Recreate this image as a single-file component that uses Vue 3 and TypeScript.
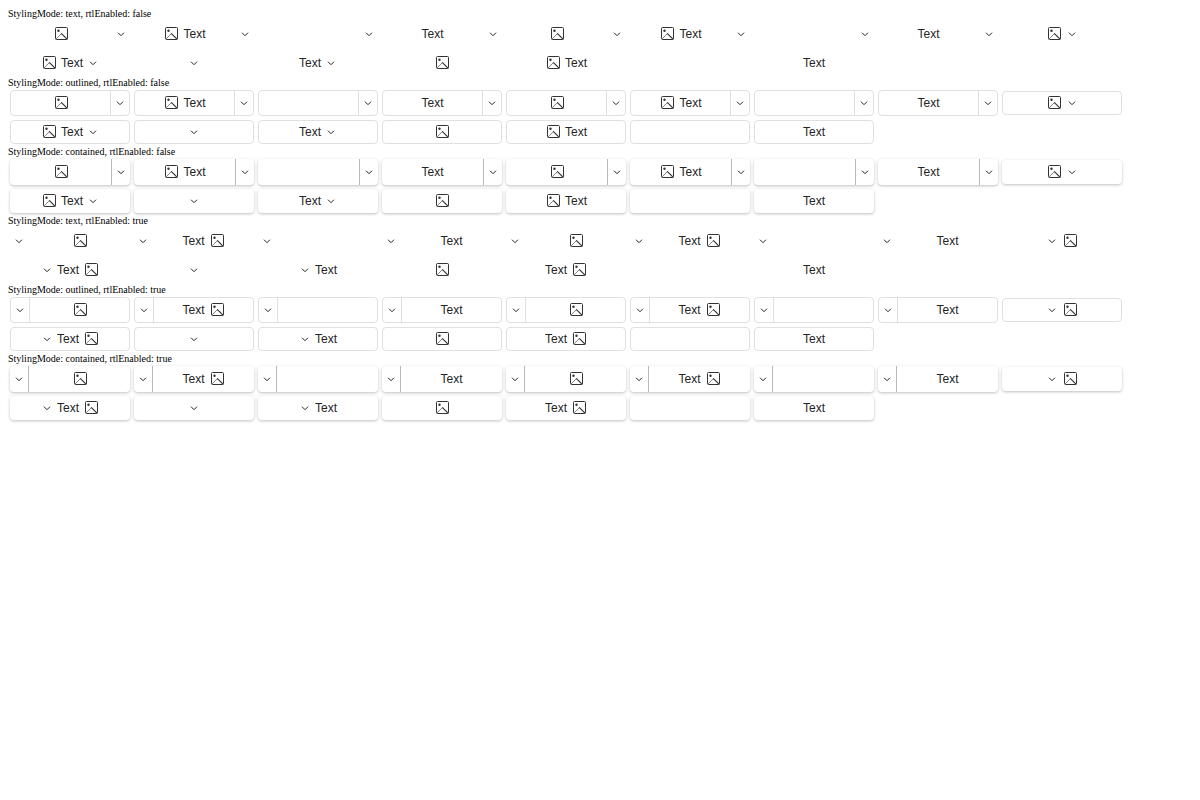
<script setup lang="ts">
type StylingMode = 'text' | 'outlined' | 'contained'

interface ButtonVariant {
  icon: boolean
  text: string
  arrow: boolean
  split: boolean
}

interface Section {
  mode: StylingMode
  rtl: boolean
}

const contents = [
  { icon: true, text: '' },
  { icon: true, text: 'Text' },
  { icon: false, text: '' },
  { icon: false, text: 'Text' },
]

const splitButtons: ButtonVariant[] = [...contents, ...contents].map((c) => ({
  ...c,
  arrow: true,
  split: true,
}))
const arrowButtons: ButtonVariant[] = contents.map((c) => ({ ...c, arrow: true, split: false }))
const plainButtons: ButtonVariant[] = contents.map((c) => ({ ...c, arrow: false, split: false }))
const variants: ButtonVariant[] = [...splitButtons, ...arrowButtons, ...plainButtons]

const modes: StylingMode[] = ['text', 'outlined', 'contained']
const sections: Section[] = [false, true].flatMap((rtl) => modes.map((mode) => ({ mode, rtl })))
</script>

<template>
  <main class="page">
    <section v-for="s in sections" :key="s.mode + s.rtl" class="section">
      <div class="caption">StylingMode: {{ s.mode }}, rtlEnabled: {{ s.rtl }}</div>
      <div class="buttons">
        <div
          v-for="(v, i) in variants"
          :key="i"
          class="drop-down-button"
          :class="[s.mode, { split: v.split }]"
          :dir="s.rtl ? 'rtl' : 'ltr'"
        >
          <button type="button" class="action" :aria-label="v.text || 'Button'">
            <svg v-if="v.icon" class="icon" viewBox="0 0 16 16" aria-hidden="true">
              <rect x="2.5" y="1.5" width="12" height="12" rx="1" />
              <circle cx="5.5" cy="4.8" r="1.2" />
              <path class="thin" d="M3 13 L8.4 7.6" />
              <path class="slope" d="M8.2 7.4 L14.3 13.4" />
            </svg>
            <span v-if="v.text">{{ v.text }}</span>
            <svg v-if="v.arrow && !v.split" class="chevron" viewBox="0 0 12 12" aria-hidden="true">
              <path d="M3 4.7 L6 7.7 L9 4.7" />
            </svg>
          </button>
          <button v-if="v.split" type="button" class="toggle" aria-label="Open">
            <svg class="chevron" viewBox="0 0 12 12" aria-hidden="true">
              <path d="M3 4.7 L6 7.7 L9 4.7" />
            </svg>
          </button>
        </div>
      </div>
    </section>
  </main>
</template>

<style>
body {
  margin: 0;
  background: #fff;
}
</style>

<style scoped>
.page {
  padding: 8px;
}

.section {
  padding-bottom: 2px;
}

.caption {
  font: 10px/12px "Liberation Serif", "Times New Roman", serif;
  color: #000;
}

.buttons {
  display: flex;
  flex-wrap: wrap;
  align-items: center;
  gap: 4px;
  padding: 1px 2px 0;
}

.drop-down-button {
  display: flex;
  box-sizing: border-box;
  width: 120px;
  height: 24px;
  border-radius: 4px;
}

.drop-down-button.split {
  height: 26px;
}

button {
  display: flex;
  align-items: center;
  justify-content: center;
  box-sizing: border-box;
  margin: 0;
  padding: 0;
  border: 0;
  background: transparent;
  color: #242424;
  font: 12px/16px "Liberation Sans", Arial, sans-serif;
}

.action {
  flex: 1;
  gap: 4px;
}

.toggle {
  width: 19px;
  border-inline-start: 1px solid transparent;
}

.outlined {
  border: 1px solid #e0e0e0;
}

.outlined .toggle {
  border-inline-start-color: #e0e0e0;
}

.contained {
  background: #fff;
  box-shadow: 0 1px 3px rgba(0, 0, 0, 0.26);
}

.contained .toggle {
  border-inline-start-color: #b8b8b8;
}

.icon {
  flex: none;
  width: 16px;
  height: 16px;
  fill: none;
  stroke: #333;
  stroke-width: 1;
}

.icon circle {
  fill: #333;
  stroke: none;
}

.icon .thin {
  stroke-width: 0.6;
}

.icon .slope {
  stroke-width: 1.2;
}

.chevron {
  flex: none;
  width: 12px;
  height: 12px;
  fill: none;
  stroke: #242424;
  stroke-width: 1;
}
</style>
